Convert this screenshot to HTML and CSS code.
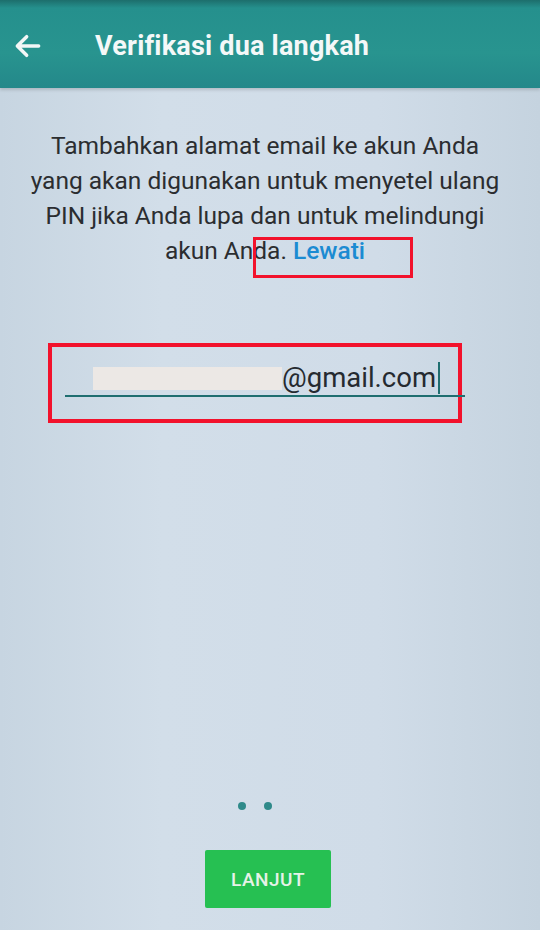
FILE: index.html
```html
<!DOCTYPE html>
<html lang="id">

<head>
    <meta charset="UTF-8">
    <meta name="viewport" content="width=device-width, initial-scale=1.0">
    <title>Verifikasi dua langkah</title>
    <link rel="stylesheet" href="styles.css">
</head>

<body>
    <div class="screen">
        <div class="top_bar">
            <a href="JavaScript:" class="back">
                <svg width="32" height="32" viewBox="0 0 24 24">
                    <path d="M20 12H5M11 5l-7 7 7 7" fill="none" stroke="#f2f6f6" stroke-width="2.6" stroke-linecap="round" stroke-linejoin="round"/>
                </svg>
            </a>
            <h1>Verifikasi dua langkah</h1>
        </div>

        <div class="content">
            <div class="intro">
                <p>Tambahkan alamat email ke akun Anda<br>yang akan digunakan untuk menyetel ulang<br>PIN jika Anda lupa dan untuk melindungi<br>akun Anda. <a href="JavaScript:" class="skip">Lewati</a></p>
                <span class="mark mark_skip"></span>
            </div>

            <div class="email_box">
                <div class="email_field">
                    <span class="hidden_name"></span>
                    <span class="domain">@gmail.com</span>
                    <span class="cursor"></span>
                </div>
            </div>
        </div>

        <div class="footer">
            <div class="dots">
                <span></span>
                <span></span>
            </div>
            <button class="next">LANJUT</button>
        </div>
    </div>
</body>

</html>
```

FILE: styles.css
```css
* {
    margin: 0;
    padding: 0;
    box-sizing: border-box;
}

a {
    text-decoration: none;
}

body {
    width: 540px;
    height: 930px;
    overflow: hidden;
    font-family: Roboto, "Noto Sans", sans-serif;
    background-color: #cfdbe7;
}

.screen {
    display: flex;
    flex-direction: column;
    height: 930px;
    background: linear-gradient(90deg, #c7d5e1 0%, #d2dee9 30%, #d0dce8 70%, #c5d3df 100%);
}

/* bar atas */
.top_bar {
    display: flex;
    align-items: center;
    height: 88px;
    padding: 4px 0 0 12px;
    background: linear-gradient(180deg, #1d6e6c 0px, #25908d 8px, #28948f 60%, #24888a 100%);
    box-shadow: 0 2px 3px rgba(0, 0, 0, 0.15);
}

.back {
    display: flex;
    width: 32px;
    height: 32px;
}

.top_bar h1 {
    margin-left: 51px;
    font-size: 27px;
    font-weight: 700;
    color: #f4f8f8;
    letter-spacing: 0.2px;
}

.content {
    flex: 1;
}

.intro {
    position: relative;
    padding: 40px 20px 0 10px;
}

.intro p {
    text-align: center;
    font-size: 24.5px;
    line-height: 35px;
    color: #2b2d30;
    white-space: nowrap;
}

.intro .skip {
    color: #1b8bd2;
    font-weight: 500;
}

/* kotak merah penanda */
.mark {
    position: absolute;
    border: 3px solid #f2122c;
}

.mark_skip {
    top: 149px;
    left: 253px;
    width: 160px;
    height: 41px;
}

.email_box {
    margin: 75px 78px 0 48px;
    height: 80px;
    border: 4px solid #f2122c;
    padding: 13px 0 0 13px;
}

.email_field {
    display: flex;
    align-items: center;
    width: 400px;
    height: 37px;
    padding-left: 28px;
    border-bottom: 2px solid #1f6e70;
}

.hidden_name {
    width: 189px;
    height: 23px;
    margin-top: 2px;
    background-color: #ece8e5;
}

.domain {
    font-size: 27.5px;
    color: #252a30;
}

.cursor {
    width: 2px;
    height: 32px;
    margin-left: 2px;
    background-color: #1f6e70;
}

.footer {
    display: flex;
    flex-direction: column;
    align-items: center;
    padding-bottom: 22px;
}

.dots {
    display: flex;
    gap: 18px;
    margin-right: 30px;
}

.dots span {
    display: block;
    width: 8px;
    height: 8px;
    border-radius: 50%;
    background-color: #2f8a8a;
}

.next {
    margin-top: 40px;
    margin-right: 4px;
    width: 126px;
    height: 58px;
    border: none;
    border-radius: 2px;
    background-color: #26c052;
    color: #e6f2e8;
    font-family: Roboto, "Noto Sans", sans-serif;
    font-size: 19px;
    font-weight: 500;
    letter-spacing: 0.5px;
}
```
